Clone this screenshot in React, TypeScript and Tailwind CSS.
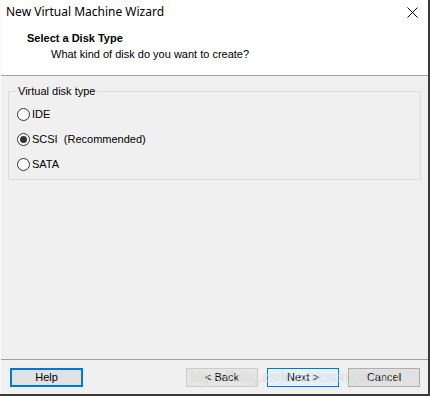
import React from "react";

function Radio({ checked, label }: { checked?: boolean; label: React.ReactNode }) {
  return (
    <div className="flex items-center h-[13px]">
      <span className="w-[13px] h-[13px] rounded-full border border-[#333333] bg-white flex items-center justify-center shrink-0">
        {checked && <span className="w-[7px] h-[7px] rounded-full bg-[#333333]" />}
      </span>
      <span className="ml-[2px] text-[11px] leading-none text-black">{label}</span>
    </div>
  );
}

export default function App() {
  return (
    <div
      className="w-[430px] h-[396px] bg-[#3a3a3a] relative overflow-hidden"
      style={{ fontFamily: '"Liberation Sans", Arial, sans-serif' }}
    >
      <div className="w-[428px] h-[394px] bg-[#f0f0f0] border-l border-[#f8f8f8] flex flex-col">
        {/* Header (white) */}
        <div className="bg-white h-[76px] border-b border-[#a0a0a0] flex flex-col">
          <div className="flex items-center justify-between h-[24px] pl-[5px] pr-[8px]">
            <span className="text-[12px] text-black" style={{ fontFamily: '"Noto Sans", sans-serif' }}>
              New Virtual Machine Wizard
            </span>
            <svg width="11" height="11" viewBox="0 0 11 11" className="mr-[2px]">
              <path d="M0.5 0.5 L10.5 10.5 M10.5 0.5 L0.5 10.5" stroke="#000" strokeWidth="1" />
            </svg>
          </div>
          <div className="pl-[26px] pt-[8px] text-[11px] font-bold text-black leading-[13px]">Select a Disk Type</div>
          <div className="pl-[50px] pt-[3px] text-[11px] text-black leading-[13px]">What kind of disk do you want to create?</div>
        </div>

        {/* Group box */}
        <div className="ml-[7px] mr-[7px] mt-[15px] h-[89px] border border-[#dcdcdc] relative">
          <span className="absolute left-[7px] -top-[7px] px-[2px] bg-[#f0f0f0] text-[11px] leading-[13px] text-black">
            Virtual disk type
          </span>
          <div className="flex flex-col pl-[8px] pt-[16px] gap-[12px]">
            <Radio label="IDE" />
            <Radio checked label={<>SCSI&nbsp;&nbsp;(Recommended)</>} />
            <Radio label="SATA" />
          </div>
        </div>

        <div className="flex-1" />

        {/* Bottom */}
        <div className="border-t border-[#a0a0a0] h-[35px] flex items-center pl-[9px] pr-[8px]">
          <button className="w-[73px] h-[19px] border-2 border-[#0078d7] bg-[#e1e1e1] text-[11px] leading-none text-black">
            Help
          </button>
          <div className="flex-1" />
          <button className="w-[72px] h-[19px] border border-[#cccccc] bg-[#e6e6e6] text-[11px] leading-none text-black">
            &lt; Back
          </button>
          <button className="ml-[9px] w-[72px] h-[19px] border border-[#0078d7] bg-[#e5f1fb] text-[11px] leading-none text-black">
            Next &gt;
          </button>
          <button className="ml-[9px] w-[72px] h-[19px] border border-[#adadad] bg-[#e1e1e1] text-[11px] leading-none text-black">
            Cancel
          </button>
        </div>
      </div>
      {/* watermark */}
      <span
        className="absolute left-[190px] top-[370px] text-[14px] leading-none text-white/50 pointer-events-none"
        style={{ textShadow: "0 0 1px rgba(140,140,140,0.4)" }}
      >
        https://blog.csdn.net/csdmgadmin
      </span>
    </div>
  );
}
